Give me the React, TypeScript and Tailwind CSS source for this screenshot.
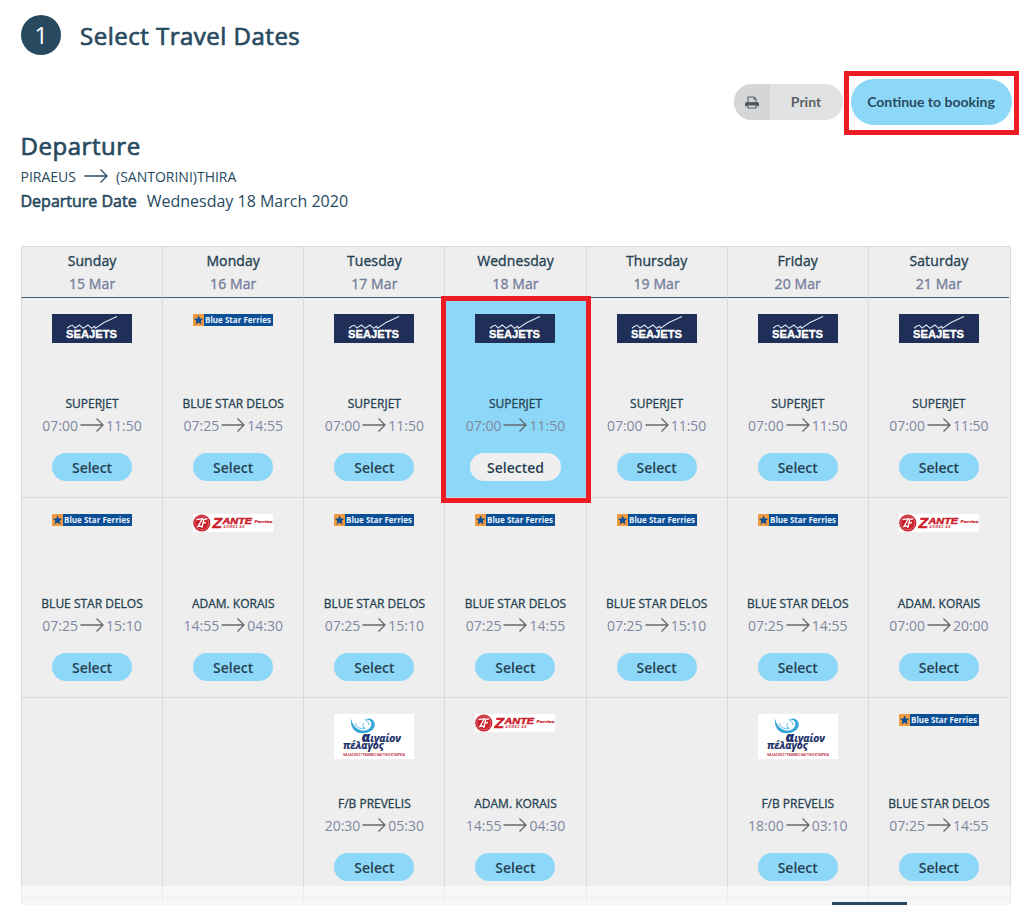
type Operator = "seajets" | "bluestar" | "zante" | "aegean";

type Trip = {
  operator: Operator;
  vessel: string;
  departs: string;
  arrives: string;
  selected?: boolean;
};

const days = [
  { name: "Sunday", date: "15 Mar" },
  { name: "Monday", date: "16 Mar" },
  { name: "Tuesday", date: "17 Mar" },
  { name: "Wednesday", date: "18 Mar" },
  { name: "Thursday", date: "19 Mar" },
  { name: "Friday", date: "20 Mar" },
  { name: "Saturday", date: "21 Mar" },
];

function superjet(selected = false): Trip {
  return { operator: "seajets", vessel: "SUPERJET", departs: "07:00", arrives: "11:50", selected };
}

function delos(arrives: string): Trip {
  return { operator: "bluestar", vessel: "BLUE STAR DELOS", departs: "07:25", arrives };
}

function korais(departs: string, arrives: string): Trip {
  return { operator: "zante", vessel: "ADAM. KORAIS", departs, arrives };
}

function prevelis(departs: string, arrives: string): Trip {
  return { operator: "aegean", vessel: "F/B PREVELIS", departs, arrives };
}

const rows: (Trip | null)[][] = [
  [superjet(), delos("14:55"), superjet(), superjet(true), superjet(), superjet(), superjet()],
  [
    delos("15:10"),
    korais("14:55", "04:30"),
    delos("15:10"),
    delos("14:55"),
    delos("15:10"),
    delos("14:55"),
    korais("07:00", "20:00"),
  ],
  [null, null, prevelis("20:30", "05:30"), korais("14:55", "04:30"), null, prevelis("18:00", "03:10"), delos("14:55")],
  [null, null, null, null, null, null, null],
];

function Arrow({ className }: { className: string }) {
  return (
    <svg viewBox="0 0 24 14" className={className} fill="none" stroke="currentColor" strokeWidth="1.3">
      <path d="M0.5 7H23M16.5 0.5L23 7L16.5 13.5" />
    </svg>
  );
}

function SeajetsLogo() {
  return (
    <svg viewBox="0 0 80 29" className="h-[29px] w-20">
      <rect width="80" height="29" fill="#1f2f57" />
      <path
        d="M15 14.3L18 12L20.5 11.3L23 14L27.5 11L31 14.3L36 11L39.5 14.3L42.5 12.3L43.5 14.3L52 8.5L65 2.5"
        fill="none"
        stroke="#dde2ee"
        strokeWidth="1.1"
      />
      <text
        x="14"
        y="23.6"
        fill="#fff"
        fontFamily="Liberation Sans, sans-serif"
        fontWeight="700"
        fontSize="10.2"
        stroke="#fff"
        strokeWidth="0.3"
        textLength="51"
        lengthAdjust="spacingAndGlyphs"
      >
        SEAJETS
      </text>
    </svg>
  );
}

function BlueStarLogo() {
  return (
    <svg viewBox="0 0 80 12" className="h-3 w-20">
      <rect width="80" height="12" fill="#0b4f97" />
      <rect width="11" height="12" fill="#f29a3f" />
      <path
        d="M5.6 1.2L6.9 4.5L10.4 4.7L7.7 6.9L8.7 10.6L5.6 8.5L2.5 10.6L3.4 6.9L0.8 4.7L4.3 4.5Z"
        fill="#0b4f97"
      />
      <text
        x="12"
        y="8.8"
        fill="#e9f1f9"
        fontFamily="Open Sans, sans-serif"
        fontWeight="700"
        fontSize="8.2"
        textLength="66"
        lengthAdjust="spacingAndGlyphs"
      >
        Blue Star Ferries
      </text>
    </svg>
  );
}

function ZanteLogo() {
  return (
    <svg viewBox="0 0 80 18" className="h-[18px] w-20">
      <rect width="80" height="18" fill="#fff" />
      <circle cx="8.8" cy="9" r="8.6" fill="#c9202b" />
      <circle cx="8.8" cy="9" r="6.9" fill="none" stroke="#e58d93" strokeWidth="0.6" />
      <path
        d="M3.6 5.6L9.5 4.6L5 12.4L9.2 12M14.2 4.6L10.8 5.6L8.8 14M10 9.2L13 8.5"
        fill="none"
        stroke="#fff"
        strokeWidth="1.3"
      />
      <g fill="#c9202b" fontFamily="Liberation Sans, sans-serif" fontWeight="700" fontStyle="italic">
        <text x="19.5" y="14" fontSize="15" textLength="9.5" lengthAdjust="spacingAndGlyphs" stroke="#c9202b" strokeWidth="0.5">
          Z
        </text>
        <text x="29.5" y="10.3" fontSize="9.6" textLength="29.5" lengthAdjust="spacingAndGlyphs" stroke="#c9202b" strokeWidth="0.5">
          ANTE
        </text>
        <text x="61.5" y="9.4" fontSize="4.4" textLength="18" lengthAdjust="spacingAndGlyphs" stroke="#c9202b" strokeWidth="0.2">
          Ferries
        </text>
        <text x="30.5" y="14.3" fontSize="3" textLength="21">
          ΑΝΜΕΖ ΑΕ
        </text>
      </g>
    </svg>
  );
}

function AegeanLogo() {
  return (
    <svg viewBox="0 0 80 45" className="h-[45px] w-20">
      <rect width="80" height="45" fill="#fff" />
      <path
        d="M17 4.5C16 12 20 19.5 28.5 19.3C36 19 41 15 40.8 10.5C40.5 5.5 35.5 3 31 5.5C35.5 5 38 7.5 37.3 11C36.3 15.5 31 17.3 27 16.3C22 15 18.5 11 17 4.5Z"
        fill="#36a5d8"
      />
      <path
        d="M21 9C22 13.5 26.5 15.5 31 14.2C28.5 12.8 28.3 10.8 29.8 9.4M31 5.5C33.5 7.5 35.5 8.5 35 11"
        fill="none"
        stroke="#77c5e7"
        strokeWidth="1.1"
      />
      <g fill="#1b2e68" stroke="#1b2e68" strokeWidth="0.2" fontFamily="Open Sans, sans-serif" fontWeight="700" fontStyle="italic">
        <text x="27.5" y="28.1" fontSize="10" textLength="39.5" lengthAdjust="spacingAndGlyphs">
          <tspan fontSize="13.5" fontWeight="800">
            α
          </tspan>
          ιγαίον
        </text>
        <text x="9" y="35.3" fontSize="10" textLength="40.5" lengthAdjust="spacingAndGlyphs">
          πέλαγος
        </text>
      </g>
      <text
        x="9"
        y="41.6"
        fill="#c8323c"
        fontFamily="Liberation Sans, sans-serif"
        fontWeight="700"
        fontSize="2.8"
        textLength="62"
        lengthAdjust="spacingAndGlyphs"
      >
        ΘΑΛΑΣΣΙΕΣ ΓΡΑΜΜΕΣ ΝΑΥΤΙΚΗ ΕΤΑΙΡΕΙΑ
      </text>
    </svg>
  );
}

const logos = {
  seajets: SeajetsLogo,
  bluestar: BlueStarLogo,
  zante: ZanteLogo,
  aegean: AegeanLogo,
};

function PrintIcon() {
  return (
    <svg viewBox="0 0 14 13" className="h-[13px] w-3.5" fill="none" stroke="#5b6266" strokeWidth="1.1">
      <path d="M3 6.5V1H9L11 3V6.5M9 1V3H11" />
      <path d="M0.5 9.8V8Q0.5 6.5 2 6.5H12Q13.5 6.5 13.5 8V9.8Z" fill="#4b5459" />
      <path d="M3 9H11V12H3Z" fill="#d5d6d8" />
    </svg>
  );
}

function TripCell({ trip }: { trip: Trip | null }) {
  if (!trip) {
    return <div className="h-[200px] border-b border-l border-[#d9dadb]" />;
  }

  const Logo = logos[trip.operator];

  return (
    <div
      className={`flex h-[200px] flex-col items-center border-b border-l border-[#d9dadb] pt-4 ${
        trip.selected ? "relative bg-[#8dd8f8]" : ""
      }`}
    >
      <div className="h-20">
        <Logo />
      </div>
      <div className="text-[12px] leading-5 text-[#264252] [-webkit-text-stroke:0.3px]">{trip.vessel}</div>
      <div className="flex h-[22px] items-center text-[14px] text-[#7f88a0]">
        {trip.departs}
        <Arrow className="mx-0.5 h-3.5 w-6 text-[#66696c]" />
        {trip.arrives}
      </div>
      <button
        className={`mt-[17px] h-7 rounded-full text-[14px] font-semibold text-[#264252] ${
          trip.selected ? "w-[91px] bg-[#efefef]" : "w-20 bg-[#8dd8f8]"
        }`}
      >
        {trip.selected ? "Selected" : "Select"}
      </button>
      {trip.selected && <div className="absolute -top-0.5 -right-[5px] -bottom-1.5 -left-1 z-10 border-5 border-[#ed1c24]" />}
    </div>
  );
}

export default function App() {
  return (
    <main className="relative h-[905px] w-[1027px] overflow-hidden bg-white font-['Open_Sans',sans-serif] text-[#284a60]">
      <header className="flex items-center gap-[19px] pt-[15px] pl-[21px]">
        <div className="flex size-10 items-center justify-center rounded-full bg-[#284a60] text-[24px] text-white">1</div>
        <h1 className="pt-0.5 text-[24px] leading-8 tracking-[0.5px] [-webkit-text-stroke:0.7px]">Select Travel Dates</h1>
      </header>

      <div className="mt-4 mr-2 flex h-16 items-start justify-end font-['Lato',sans-serif] text-[14px] font-bold">
        <button className="mt-[13px] flex h-9 w-[109px] overflow-hidden rounded-full bg-[#e1e2e3] text-[#5b6266]">
          <span className="flex h-full w-9 items-center justify-center bg-[#d5d6d8]">
            <PrintIcon />
          </span>
          <span className="flex h-full flex-1 items-center justify-center pr-px pb-0.5">Print</span>
        </button>
        <div className="ml-px flex h-16 w-[175px] items-start justify-center border-5 border-[#ed1c24] pt-[3px]">
          <button className="mr-px h-[46px] w-[161px] rounded-full bg-[#8dd8f8] pb-0.5 text-[#284a60]">
            Continue to booking
          </button>
        </div>
      </div>

      <section className="pl-[20.5px]">
        <h2 className="-mt-[5px] text-[24px] leading-8 tracking-[0.55px] [-webkit-text-stroke:0.7px]">Departure</h2>
        <div className="mt-0.5 flex h-6 items-center text-[14px]">
          PIRAEUS
          <Arrow className="mx-2 h-3.5 w-6" />
          (SANTORINI)THIRA
        </div>
        <div className="flex h-[26px] items-center gap-2.5 text-[16px]">
          <span className="[-webkit-text-stroke:0.6px]">Departure Date</span>
          <span>Wednesday 18 March 2020</span>
        </div>
      </section>

      <section className="mt-8 ml-[21px] w-[990px] border-t border-r border-[#d9dadb] bg-[#eeeeee] pr-px">
        <div className="grid grid-cols-7">
          {days.map((day) => (
            <div
              key={day.name}
              className="flex h-[51px] flex-col items-center border-b border-l border-b-[#3f5f72] border-l-[#d9dadb] pt-0.5 text-[14px] leading-[23px] tracking-[0.1px] [-webkit-text-stroke:0.35px]"
            >
              <div className="text-[#264252]">{day.name}</div>
              <div className="text-[#75809c]">{day.date}</div>
            </div>
          ))}
        </div>
        {rows.map((trips, row) => (
          <div key={row} className="grid grid-cols-7">
            {trips.map((trip, column) => (
              <TripCell key={column} trip={trip} />
            ))}
          </div>
        ))}
      </section>

      {/* translucent footer bar over the end of the table */}
      <div className="absolute bottom-0 left-0 h-[19px] w-full bg-white/55">
        <div className="absolute bottom-0 left-[832px] h-[3px] w-[75px] bg-[#284a60]" />
      </div>
    </main>
  );
}
